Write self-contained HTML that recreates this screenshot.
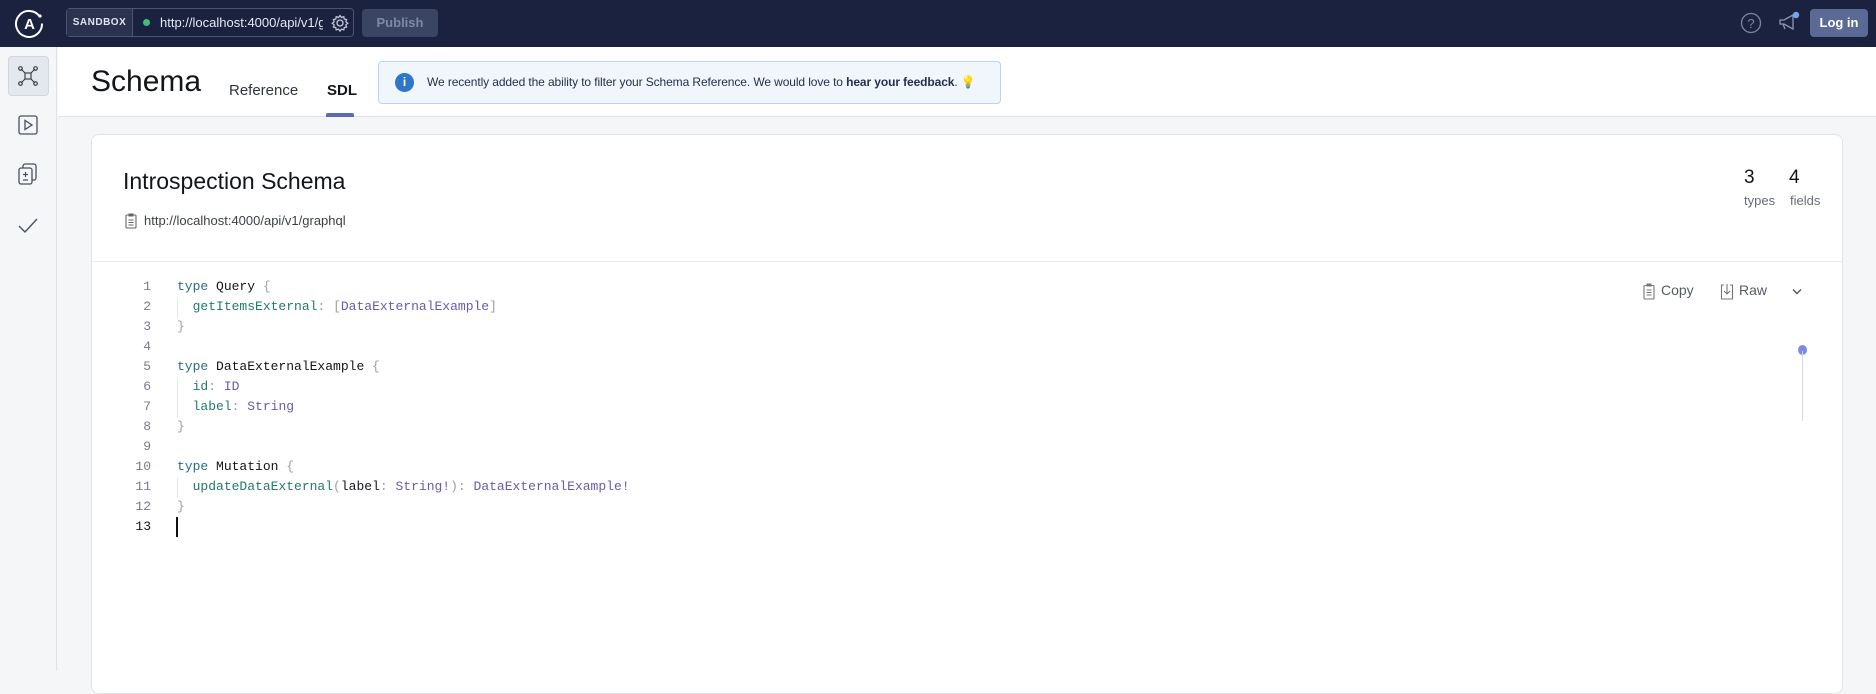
<!DOCTYPE html>
<html><head><meta charset="utf-8"><style>
*{box-sizing:border-box;margin:0;padding:0}
body{width:1876px;height:671px;overflow:hidden;background:#f4f6f8;font-family:"Liberation Sans",sans-serif;position:relative;color:#12151a}
.abs{position:absolute}
.top{left:0;top:0;width:1876px;height:47px;background:#1b2240}
.side{left:0;top:47px;width:57px;height:624px;background:#f4f6f8;border-right:1px solid #dfe3e8}
.hdr{left:58px;top:47px;width:1818px;height:70px;background:#fff;border-bottom:1px solid #dfe3e8}
.card{left:91px;top:134px;width:1752px;height:560px;background:#fff;border:1px solid #e1e5ea;border-radius:8px}
.code{font-family:"Liberation Mono",monospace;font-size:13px;line-height:20px;white-space:pre}
.ln{position:absolute;width:30px;text-align:right;color:#777d88;font-family:"Liberation Mono",monospace;font-size:13px;line-height:20px}
.k{color:#2a6a8a}.f{color:#217a6a}.t{color:#6a5aa8}.p{color:#9aa0a8}
</style></head><body>
<div class="abs top">
 <svg class="abs" style="left:14px;top:8px" width="31" height="31" viewBox="0 0 31 31"><path d="M26 9 A13 13 0 1 0 28 15.5" fill="none" stroke="#fff" stroke-width="2"/><circle cx="26" cy="8" r="1.6" fill="#fff"/><text x="15.5" y="21" text-anchor="middle" fill="#fff" font-size="15" font-weight="bold" font-family="Liberation Sans">A</text></svg>
 <div class="abs" style="left:66px;top:8px;width:288px;height:29px;border:1px solid #4a5573;border-radius:4px"></div>
 <div class="abs" style="left:67px;top:9px;width:66px;height:27px;background:#2a3250;border-right:1px solid #4a5573;color:#e0e4ee;font-size:10px;font-weight:bold;letter-spacing:.5px;line-height:27px;text-align:center">SANDBOX</div>
 <div class="abs" style="left:143px;top:19px;width:7px;height:7px;border-radius:50%;background:#3cc07a"></div>
 <div class="abs" style="left:160px;top:9px;width:163px;height:27px;overflow:hidden;color:#e6e9f0;font-size:13px;line-height:27px;white-space:nowrap">http://localhost:4000/api/v1/graphql</div>
 <svg class="abs" style="left:331px;top:14px" width="18" height="18" viewBox="0 0 18 18"><circle cx="9" cy="9" r="3" fill="none" stroke="#c8cde0" stroke-width="1.3"/><path d="M9 1.5l1.5 2 2.3-.8.4 2.4 2.4.4-.8 2.3 2 1.5-2 1.5.8 2.3-2.4.4-.4 2.4-2.3-.8-1.5 2-1.5-2-2.3.8-.4-2.4-2.4-.4.8-2.3-2-1.5 2-1.5-.8-2.3 2.4-.4.4-2.4 2.3.8z" fill="none" stroke="#c8cde0" stroke-width="1.2"/></svg>
 <div class="abs" style="left:362px;top:9px;width:76px;height:28px;background:#3a4463;border-radius:4px;color:#7f89a6;font-size:13px;font-weight:bold;line-height:28px;text-align:center">Publish</div>
 <svg class="abs" style="left:1740px;top:12px" width="22" height="22"><circle cx="11" cy="11" r="9.5" fill="none" stroke="#7d86a3" stroke-width="1.3"/><text x="11" y="16" text-anchor="middle" fill="#7d86a3" font-size="13" font-family="Liberation Sans">?</text></svg>
 <svg class="abs" style="left:1777px;top:10px" width="24" height="24"><path d="M3 10h4l9-5v14l-9-5H3z M6 14l2 5" fill="none" stroke="#8d96b3" stroke-width="1.3"/><circle cx="19" cy="5" r="3.2" fill="#6fa8f0"/></svg>
 <div class="abs" style="left:1810px;top:9px;width:58px;height:28px;background:#5a6a95;border-radius:4px;color:#fff;font-size:13px;font-weight:bold;line-height:28px;text-align:center">Log in</div>
</div>
<div class="abs side">
 <div class="abs" style="left:8px;top:9px;width:41px;height:40px;background:#e4e7ed;border:1px solid #d2d7df;border-radius:4px"></div>
 <svg class="abs" style="left:17px;top:18px" width="22" height="22" viewBox="0 0 22 22" fill="none" stroke="#3a4150" stroke-width="1.2"><rect x="8" y="8" width="6" height="6"/><path d="M8 8L4 4M14 8l4-4M8 14l-4 4M14 14l4 4"/><circle cx="3.5" cy="3.5" r="1.8"/><circle cx="18.5" cy="3.5" r="1.8"/><circle cx="3.5" cy="18.5" r="1.8"/><circle cx="18.5" cy="18.5" r="1.8"/></svg>
 <svg class="abs" style="left:18px;top:68px" width="20" height="20"><rect x="1" y="1" width="18" height="18" rx="2" fill="none" stroke="#4a5160" stroke-width="1.3"/><path d="M7 5.5v9l7-4.5z" fill="none" stroke="#4a5160" stroke-width="1.3"/></svg>
 <svg class="abs" style="left:18px;top:116px" width="20" height="22"><rect x="5" y="1" width="13" height="16" rx="2" fill="none" stroke="#4a5160" stroke-width="1.3"/><rect x="1" y="5" width="13" height="16" rx="2" fill="#f4f6f8" stroke="#4a5160" stroke-width="1.3"/><path d="M7.5 9v5M5 11.5h5M5 17h5" stroke="#4a5160" stroke-width="1.2"/></svg>
 <svg class="abs" style="left:17px;top:170px" width="22" height="18"><path d="M2 9l6 6L20 2" fill="none" stroke="#4a5160" stroke-width="1.4"/></svg>
</div>
<div class="abs hdr">
 <div class="abs" style="left:33px;top:13px;font-size:30px;line-height:44px">Schema</div>
 <div class="abs" style="left:171px;top:34px;font-size:15px;line-height:20px;color:#2e3440">Reference</div>
 <div class="abs" style="left:269px;top:34px;font-size:15px;line-height:20px;font-weight:bold;color:#12151a">SDL</div>
 <div class="abs" style="left:268px;top:66px;width:28px;height:4px;background:#5b6bae;border-radius:2px 2px 0 0"></div>
 <div class="abs" style="left:320px;top:14px;width:623px;height:43px;background:#f0f6fc;border:1px solid #bcd4ee;border-radius:4px"></div>
 <div class="abs" style="left:337px;top:26px;width:19px;height:19px;border-radius:50%;background:#2e76c8;color:#fff;font-size:12px;font-weight:bold;text-align:center;line-height:19px">i</div>
 <div class="abs" style="left:369px;top:26px;font-size:12px;line-height:19px;color:#23314a;white-space:nowrap;letter-spacing:-0.1px">We recently added the ability to filter your Schema Reference. We would love to <b>hear your feedback</b>. <span style="color:#e8b020">💡</span></div>
</div>
<div class="abs card">
 <div class="abs" style="left:31px;top:30px;font-size:23px;line-height:32px">Introspection Schema</div>
 <svg class="abs" style="left:33px;top:78px" width="12" height="16"><rect x="1" y="2" width="10" height="13" rx="1" fill="none" stroke="#666" stroke-width="1.1"/><rect x="3.5" y="0.5" width="5" height="3" fill="#666"/><path d="M3.5 7h5M3.5 9.5h5M3.5 12h5" stroke="#666"/></svg>
 <div class="abs" style="left:52px;top:76px;font-size:13px;line-height:20px;color:#3a3f48">http://localhost:4000/api/v1/graphql</div>
 <div class="abs" style="left:1652px;top:32px;font-size:19px">3</div>
 <div class="abs" style="left:1697px;top:32px;font-size:19px">4</div>
 <div class="abs" style="left:1652px;top:58px;font-size:13px;color:#666c76">types</div>
 <div class="abs" style="left:1698px;top:58px;font-size:13px;color:#666c76">fields</div>
 <div class="abs" style="left:0;top:126px;width:1750px;height:1px;background:#e6e9ee"></div>
 <svg class="abs" style="left:1551px;top:148px" width="12" height="17"><rect x="1" y="2.5" width="10" height="13.5" rx="1" fill="none" stroke="#777" stroke-width="1.1"/><rect x="3.5" y="0.5" width="5" height="3" fill="#777"/><path d="M3.5 7h5M3.5 9.5h5M3.5 12h5" stroke="#777"/></svg>
 <div class="abs" style="left:1569px;top:147px;font-size:14px;color:#555b66">Copy</div>
 <svg class="abs" style="left:1628px;top:148px" width="14" height="17"><path d="M4 2H1.5v14h11V2H10M7 1v10M4 8l3 3 3-3" fill="none" stroke="#777" stroke-width="1.1"/></svg>
 <div class="abs" style="left:1647px;top:147px;font-size:14px;color:#555b66">Raw</div>
 <svg class="abs" style="left:1700px;top:153px" width="10" height="8"><path d="M1 1.5l4 4 4-4" fill="none" stroke="#555" stroke-width="1.4"/></svg>
 <div class="abs" style="left:1706px;top:210px;width:9px;height:10px;border-radius:50%;background:#7a8ae6"></div>
 <div class="abs" style="left:1710px;top:216px;width:1px;height:70px;background:#d6d9df"></div>
 <div class="abs" style="left:85px;top:163px;width:1px;height:20px;background:#e4e6ea"></div>
 <div class="abs" style="left:85px;top:243px;width:1px;height:40px;background:#e4e6ea"></div>
 <div class="abs" style="left:85px;top:343px;width:1px;height:20px;background:#e4e6ea"></div>
 <div class="abs" style="left:84px;top:382px;width:2px;height:20px;background:#111"></div>
 <span class="ln" style="top:142px;left:29px">1</span><span class="ln" style="top:162px;left:29px">2</span><span class="ln" style="top:182px;left:29px">3</span><span class="ln" style="top:202px;left:29px">4</span><span class="ln" style="top:222px;left:29px">5</span><span class="ln" style="top:242px;left:29px">6</span><span class="ln" style="top:262px;left:29px">7</span><span class="ln" style="top:282px;left:29px">8</span><span class="ln" style="top:302px;left:29px">9</span><span class="ln" style="top:322px;left:29px">10</span><span class="ln" style="top:342px;left:29px">11</span><span class="ln" style="top:362px;left:29px">12</span><span class="ln" style="top:382px;left:29px;color:#12151a">13</span>
 <div class="abs code" style="left:85px;top:142px;color:#12151a"><span class="k">type</span> Query <span class="p">{</span>
  <span class="f">getItemsExternal</span><span class="p">:</span> <span class="p">[</span><span class="t">DataExternalExample</span><span class="p">]</span>
<span class="p">}</span>

<span class="k">type</span> DataExternalExample <span class="p">{</span>
  <span class="f">id</span><span class="p">:</span> <span class="t">ID</span>
  <span class="f">label</span><span class="p">:</span> <span class="t">String</span>
<span class="p">}</span>

<span class="k">type</span> Mutation <span class="p">{</span>
  <span class="f">updateDataExternal</span><span class="p">(</span>label<span class="p">:</span> <span class="t">String!</span><span class="p">):</span> <span class="t">DataExternalExample!</span>
<span class="p">}</span></div>
</div>
</body></html>
